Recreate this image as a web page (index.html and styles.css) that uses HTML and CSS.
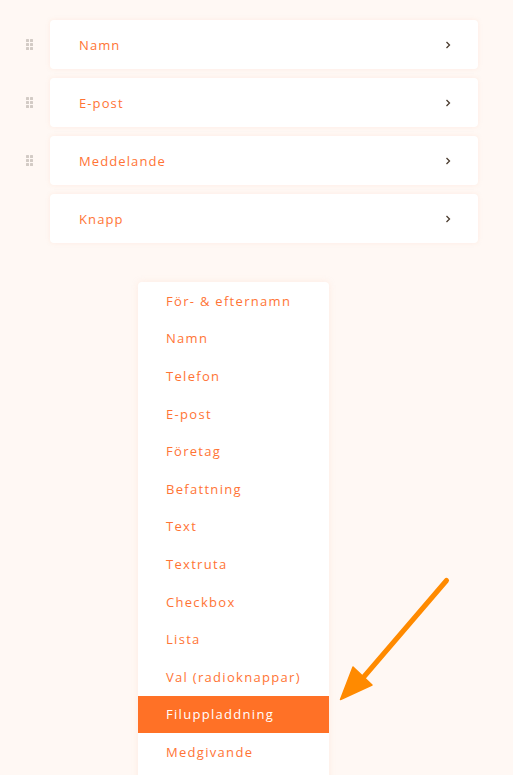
FILE: index.html
```html
<!DOCTYPE html>
<html lang="sv">
<head>
<meta charset="utf-8">
<title>Formulärfält</title>
<link rel="stylesheet" href="styles.css">
</head>
<body>
<div class="page">
  <div class="fields">
    <div class="row">
      <div class="handle"><span></span><span></span><span></span><span></span><span></span><span></span></div>
      <div class="card"><span class="label">Namn</span><svg class="chev" width="6" height="8" viewBox="0 0 6 8"><path d="M1.5 1 L4.5 4 L1.5 7" fill="none" stroke="#4a3b2e" stroke-width="1.3"/></svg></div>
    </div>
    <div class="row">
      <div class="handle"><span></span><span></span><span></span><span></span><span></span><span></span></div>
      <div class="card"><span class="label">E-post</span><svg class="chev" width="6" height="8" viewBox="0 0 6 8"><path d="M1.5 1 L4.5 4 L1.5 7" fill="none" stroke="#4a3b2e" stroke-width="1.3"/></svg></div>
    </div>
    <div class="row">
      <div class="handle"><span></span><span></span><span></span><span></span><span></span><span></span></div>
      <div class="card"><span class="label">Meddelande</span><svg class="chev" width="6" height="8" viewBox="0 0 6 8"><path d="M1.5 1 L4.5 4 L1.5 7" fill="none" stroke="#4a3b2e" stroke-width="1.3"/></svg></div>
    </div>
    <div class="row">
      <div class="handle empty"></div>
      <div class="card"><span class="label">Knapp</span><svg class="chev" width="6" height="8" viewBox="0 0 6 8"><path d="M1.5 1 L4.5 4 L1.5 7" fill="none" stroke="#4a3b2e" stroke-width="1.3"/></svg></div>
    </div>
  </div>

  <ul class="menu">
    <li>För- &amp; efternamn</li>
    <li>Namn</li>
    <li>Telefon</li>
    <li>E-post</li>
    <li>Företag</li>
    <li>Befattning</li>
    <li>Text</li>
    <li>Textruta</li>
    <li>Checkbox</li>
    <li>Lista</li>
    <li>Val (radioknappar)</li>
    <li class="active">Filuppladdning</li>
    <li>Medgivande</li>
  </ul>

  <svg class="arrow" width="513" height="775" viewBox="0 0 513 775">
    <line x1="446.5" y1="580.5" x2="362" y2="679" stroke="#ff8a00" stroke-width="5" stroke-linecap="round"/>
    <polygon points="340.5,699.5 353,667 372,685" fill="#ff8a00" stroke="#ff8a00" stroke-width="1.5" stroke-linejoin="round"/>
  </svg>
</div>
</body>
</html>
```
FILE: styles.css
```css
html, body {
  margin: 0;
  padding: 0;
  height: 100%;
  overflow: hidden;
}
body {
  background: #fff8f4;
  font-family: "Open Sans", "Liberation Sans", sans-serif;
}
.page {
  position: relative;
  width: 513px;
  height: 775px;
  overflow: hidden;
}
.fields {
  display: flex;
  flex-direction: column;
  gap: 9px;
  padding-top: 20px;
}
.row {
  display: flex;
  align-items: center;
}
.handle {
  width: 50px;
  display: grid;
  grid-template-columns: 3px 3px;
  grid-auto-rows: 3px;
  column-gap: 1px;
  row-gap: 1px;
  justify-content: end;
  padding-right: 17px;
  box-sizing: border-box;
  align-content: center;
}
.handle span {
  background: #d3cbc5;
  border-radius: 0.5px;
}
.card {
  width: 428px;
  height: 49px;
  box-sizing: border-box;
  background: #ffffff;
  border-radius: 4px;
  box-shadow: 0 0 4px rgba(250, 200, 175, 0.25);
  display: flex;
  align-items: center;
  justify-content: space-between;
  padding: 0 27px 0 29px;
}
.label {
  color: #ff7435;
  font-size: 13px;
  letter-spacing: 1.1px;
}
.chev {
  display: block;
}
.menu {
  list-style: none;
  margin: 39px 0 0 138px;
  padding: 0 0 20px 0;
  width: 191px;
  background: #ffffff;
  border-radius: 4px 4px 0 0;
  box-shadow: 0 0 6px rgba(250, 200, 175, 0.25);
}
.menu li {
  height: 37.6px;
  display: flex;
  align-items: center;
  padding-left: 28px;
  color: #ff7435;
  font-size: 13px;
  letter-spacing: 1.3px;
}
.menu li.active {
  background: #ff7126;
  color: #ffffff;
}
.arrow {
  position: absolute;
  left: 0;
  top: 0;
  pointer-events: none;
}
```
